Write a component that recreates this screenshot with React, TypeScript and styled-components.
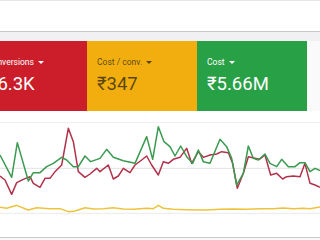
import styled, { createGlobalStyle } from "styled-components"

const GlobalStyle = createGlobalStyle`
    html, body {
        margin: 0;
        padding: 0;
        background: #fafafa;
        overflow: hidden;
    }
    body {
        width: 320px;
        height: 240px;
        font-family: Roboto, "Liberation Sans", sans-serif;
    }
`

const metrics = [
    { label: 'Conversions', value: '16.3K', bg: '#cb1d2a', fg: '#ffffff' },
    { label: 'Cost / conv.', value: '₹347', bg: '#f1ae0e', fg: 'rgba(32, 28, 20, 0.72)' },
    { label: 'Cost', value: '₹5.66M', bg: '#28a046', fg: '#ffffff' },
]

const green = '0,132 35,199 52,95 85,210 100,185 120,185 140,167 160,157 185,139 200,147 220,167 235,167 255,135 272,152 300,142 320,115 340,139 370,149 405,157 440,77 458,145 475,47 492,92 510,107 525,135 542,105 560,137 578,157 595,117 610,152 630,157 660,85 680,107 695,142 710,222 730,187 745,105 760,142 775,147 795,129 810,157 830,167 845,145 865,167 885,167 900,155 915,155 930,182 945,172 960,179'
const red = '0,195 15,207 35,250 50,215 70,205 90,197 100,217 120,229 135,202 150,202 165,182 185,162 205,52 220,92 235,182 255,199 270,189 290,172 300,182 325,162 340,204 355,195 370,172 390,185 405,162 425,147 440,135 455,162 475,192 490,152 505,157 520,145 540,139 560,112 575,157 595,122 610,139 630,132 650,129 665,122 685,125 698,157 712,232 730,187 745,137 765,142 778,145 795,132 812,192 830,187 848,204 860,197 880,195 900,197 915,157 930,217 945,222 960,229'
const yellow = '0,289 20,292 50,283 85,297 110,290 150,293 180,293 205,302 225,300 255,290 280,294 310,293 340,290 370,294 400,295 440,292 460,293 475,283 490,292 520,295 560,296 620,297 660,295 700,294 740,295 780,293 820,293 850,291 880,293 910,292 930,293 960,288'

export default function App () {
    return (
        <Page>
            <GlobalStyle />
            <TopBar />
            <Band />
            <Cards>
                {metrics.map((m) => (
                    <Card key={m.label} $bg={m.bg} $fg={m.fg}>
                        <Label>{m.label}</Label>
                        <Value>{m.value}</Value>
                    </Card>
                ))}
            </Cards>
            <Chart>
                <svg width="320" height="126" viewBox="0 0 960 378">
                    <line x1="0" y1="35" x2="960" y2="35" stroke="#eeeeee" strokeWidth="3" />
                    <line x1="0" y1="172" x2="960" y2="172" stroke="#e2e2e2" strokeWidth="3" />
                    <line x1="0" y1="307" x2="960" y2="307" stroke="#ebebeb" strokeWidth="3" />
                    <polyline points={yellow} fill="none" stroke="#eec33c" strokeWidth="4.5" strokeLinejoin="round" />
                    <polyline points={red} fill="none" stroke="#b1324a" strokeWidth="4.5" strokeLinejoin="round" />
                    <polyline points={green} fill="none" stroke="#3a9a50" strokeWidth="4.5" strokeLinejoin="round" />
                </svg>
            </Chart>
        </Page>
    )
}

const Page = styled.div`
    width: 320px;
    height: 240px;
    display: flex;
    flex-direction: column;
    background: #fafafa;
`

const TopBar = styled.div`
    height: 30px;
    background: #ffffff;
    border-top: 1px solid #e6e6e6;
    border-bottom: 1px solid #c9c9c9;
`

const Band = styled.div`
    height: 9px;
    background: #f1f1f4;
`

const Cards = styled.div`
    display: flex;
    height: 70px;
    margin-left: -23px;
    background: #fafafa;
`

const Card = styled.div<{ $bg: string; $fg: string }>`
    width: 110px;
    flex: 0 0 110px;
    box-sizing: border-box;
    padding: 16px 10px 0;
    background: ${(p) => p.$bg};
    color: ${(p) => p.$fg};
    display: flex;
    flex-direction: column;
    gap: 6px;
`

const Label = styled.div`
    font-size: 8.5px;
    line-height: 10px;
    white-space: nowrap;
    display: flex;
    align-items: center;
    gap: 4px;

    &::after {
        content: '';
        width: 0;
        height: 0;
        border-left: 3px solid transparent;
        border-right: 3px solid transparent;
        border-top: 3px solid currentColor;
    }
`

const Value = styled.div`
    font-size: 18.5px;
    line-height: 22px;
    white-space: nowrap;
`

const Chart = styled.div`
    height: 126px;
    background: #ffffff;
    border-bottom: 1px solid #c8c8c8;

    & svg {
        display: block;
    }
`
